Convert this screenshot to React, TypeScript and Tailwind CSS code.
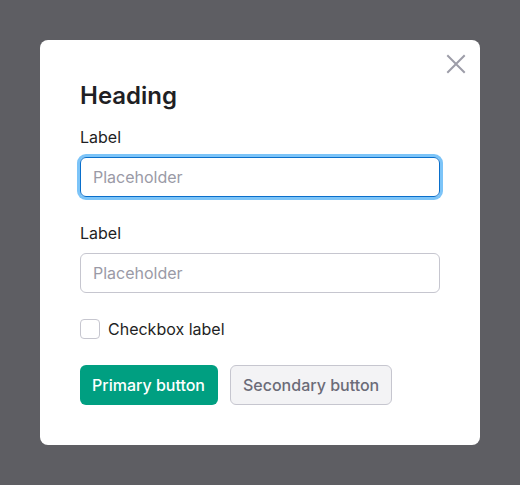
import { useEffect, useRef } from 'react'

function CloseIcon() {
  return (
    <svg width="20" height="20" viewBox="0 0 20 20" fill="none" stroke="#9d9da8" strokeWidth="2" strokeLinecap="square">
      <path d="M2 2 L18 18 M18 2 L2 18" />
    </svg>
  )
}

function Field({ autoFocus }: { autoFocus?: boolean }) {
  const ref = useRef<HTMLInputElement>(null)
  useEffect(() => {
    if (autoFocus) ref.current?.focus()
  }, [autoFocus])

  return (
    <div className="flex flex-col gap-2">
      <label className="text-base leading-6 text-[#1f1f24]">Label</label>
      <input
        ref={ref}
        type="text"
        placeholder="Placeholder"
        className={
          autoFocus
            ? 'h-10 w-full rounded-md border border-[#0a6fcb] px-3 text-base text-[#1f1f24] placeholder:text-[#9a9aa6] outline-none ring-[3px] ring-[#7cc4f8]'
            : 'h-10 w-full rounded-md border border-[#c6c6cf] px-3 text-base text-[#1f1f24] placeholder:text-[#9a9aa6] outline-none'
        }
      />
    </div>
  )
}

export default function App() {
  return (
    <div className="flex h-[485px] w-[520px] items-start justify-center bg-[#5e5e63] pt-10 font-['Inter',sans-serif]">
      <div className="relative w-[440px] rounded-lg bg-white p-10">
        <button className="absolute right-[14px] top-[14px] p-0">
          <CloseIcon />
        </button>
        <h2 className="text-2xl font-semibold leading-8 text-[#1f1f24]">Heading</h2>
        <div className="mt-[13px] flex flex-col gap-6">
          <Field autoFocus />
          <Field />
          <label className="flex items-center gap-2 text-base leading-6 text-[#1f1f24]">
            <span className="h-5 w-5 rounded border border-[#c6c6cf] bg-white" />
            Checkbox label
          </label>
          <div className="flex gap-3">
            <button className="h-10 rounded-md bg-[#009f81] pl-3 pr-[13px] text-base font-medium text-white">Primary button</button>
            <button className="h-10 rounded-md border border-[#c6c6cf] bg-[#f3f3f5] px-3 text-base font-medium text-[#6b6b78]">
              Secondary button
            </button>
          </div>
        </div>
      </div>
    </div>
  )
}
